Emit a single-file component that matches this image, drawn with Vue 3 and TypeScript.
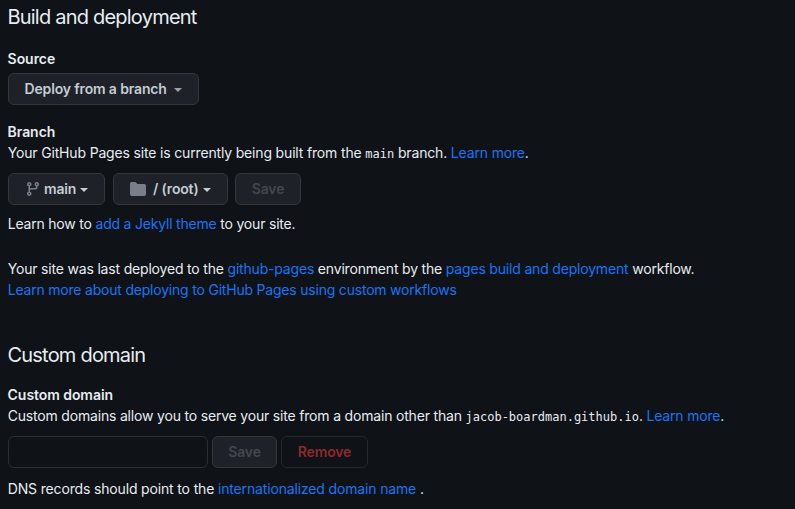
<script setup lang="ts">
import { ref } from 'vue'
const domain = ref('')
</script>

<template>
  <main class="page">
    <h2>Build and deployment</h2>
    <h3 class="src">Source</h3>
    <button class="btn deploy"><span>Deploy from a branch</span><i class="caret"></i></button>
    <h3 class="branch">Branch</h3>
    <p class="built">Your GitHub Pages site is currently being built from the <code>main</code> branch. <a>Learn more</a>.</p>
    <div class="row pick">
      <button class="btn main">
        <svg width="16" height="16" viewBox="0 0 16 16"><path d="M11.75 2.5a.75.75 0 1 0 0 1.5.75.75 0 0 0 0-1.5Zm-2.25.75a2.25 2.25 0 1 1 3 2.122V6A2.5 2.5 0 0 1 10 8.5H6a1 1 0 0 0-1 1v1.128a2.251 2.251 0 1 1-1.5 0V5.372a2.25 2.25 0 1 1 1.5 0v1.836A2.493 2.493 0 0 1 6 7h4a1 1 0 0 0 1-1v-.628A2.25 2.25 0 0 1 9.5 3.25ZM4.25 12a.75.75 0 1 0 0 1.5.75.75 0 0 0 0-1.5ZM3.5 3.25a.75.75 0 1 0 1.5 0 .75.75 0 0 0-1.5 0Z"/></svg>
        <span>main</span><i class="caret"></i>
      </button>
      <button class="btn root">
        <svg width="16" height="16" viewBox="0 0 16 16"><path d="M0 2.75C0 1.784.784 1 1.75 1H5c.55 0 1.07.26 1.4.7l.9 1.2a.25.25 0 0 0 .2.1h6.75c.966 0 1.75.784 1.75 1.75v8.5A1.75 1.75 0 0 1 14.25 15H1.75A1.75 1.75 0 0 1 0 13.25Z"/></svg>
        <span>/ (root)</span><i class="caret"></i>
      </button>
      <button class="btn save off">Save</button>
    </div>
    <p class="jekyll">Learn how to <a>add a Jekyll theme</a> to your site.</p>
    <p class="last">Your site was last deployed to the <a>github-pages</a> environment by the <a>pages build and deployment</a> workflow.</p>
    <p class="more"><a>Learn more about deploying to GitHub Pages using custom workflows</a></p>
    <h2 class="second">Custom domain</h2>
    <h3 class="cd">Custom domain</h3>
    <p class="allow">Custom domains allow you to serve your site from a domain other than <code>jacob-boardman.github.io</code>. <a>Learn more</a>.</p>
    <form class="row domain" @submit.prevent>
      <input v-model="domain" type="text" aria-label="Custom domain" />
      <button class="btn save off">Save</button>
      <button class="btn remove">Remove</button>
    </form>
    <p class="dns">DNS records should point to the <a>internationalized domain name</a> .</p>
  </main>
</template>

<style>
body { background: #0f1216; }
</style>
<style scoped>
.page { box-sizing: border-box; height: 509px; padding: 2px 8px 0; background: #0f1216; color: #e6edf3; font: 14px/21px Inter, sans-serif; overflow: hidden; white-space: nowrap; }
h2 { margin: 0 0 0 -0.6px; font-size: 20px; line-height: 30px; font-weight: 400; letter-spacing: -0.78px; }
h3 { margin: 0 0 0 -0.4px; font-size: 14px; line-height: 21px; font-weight: 600; letter-spacing: -0.06px; }
p { margin: 0 0 0 -0.3px; letter-spacing: -0.185px; }
.built { letter-spacing: -0.165px; }
.jekyll { letter-spacing: -0.2px; }
.more { letter-spacing: -0.205px; }
.allow { letter-spacing: -0.185px; }
.dns { letter-spacing: -0.155px; }
a { color: #1a75f5; }
code { font: 12px "DejaVu Sans Mono", monospace; letter-spacing: 0; }
.src { margin-top: 16px; }
.btn { box-sizing: border-box; height: 32px; display: flex; align-items: center; padding: 0 15px; border: 1px solid #34373c; border-radius: 6px; background: #1e2128; color: #c4ccd4; font: 600 14px/20px Inter, sans-serif; letter-spacing: -0.15px; }
.caret { margin-top: 1px; border: 4px solid transparent; border-top-color: currentColor; border-bottom: 0; }
.deploy { width: 191px; margin-top: 4px; padding-left: 15.5px; }
.deploy .caret { margin-left: 7.5px; opacity: 0.75; }
.branch { margin-top: 16px; }
.row { display: flex; }
.pick { margin-top: 10px; }
.main { width: 97px; }
.root { width: 115px; margin-left: 8px; }
.main svg { margin: 0 3px 0 1px; }
.main .caret { margin-left: 4px; }
.root svg { margin: 0 7px 0 1px; }
.root .caret { margin-left: 4px; }
.save { width: 66px; padding: 0; justify-content: center; }
.pick .save { margin-left: 7px; }
.off { color: #43474e; }
svg { flex: none; fill: #787f8a; }
.jekyll { margin-top: 8px; }
.last { margin-top: 24px; }
.second { margin-top: 40px; }
.cd { margin-top: 14px; }
.domain { margin-top: 10px; gap: 4px; }
.domain .save { width: 65px; }
input { box-sizing: border-box; width: 200px; height: 32px; border: 1px solid #2b2e33; border-radius: 6px; background: #0f1216; color: inherit; }
.remove { width: 87px; padding: 0; justify-content: center; color: #8e2a2c; background: #0f1216; border-color: #25282d; }
.dns { margin-top: 10px; }
</style>
